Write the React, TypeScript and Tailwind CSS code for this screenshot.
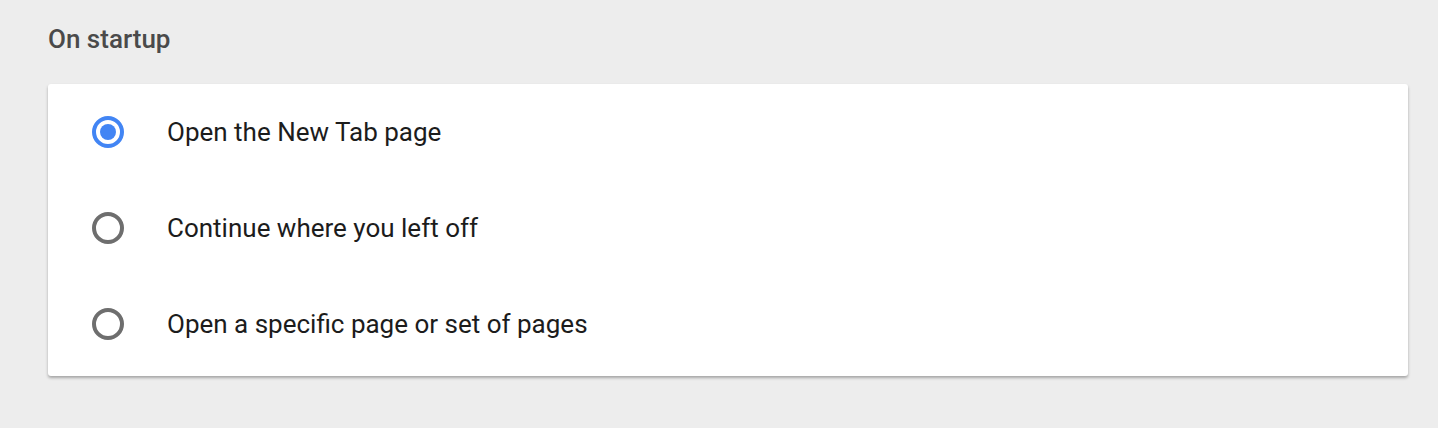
import React from 'react';

const options = [
  { label: 'Open the New Tab page', checked: true },
  { label: 'Continue where you left off', checked: false },
  { label: 'Open a specific page or set of pages', checked: false },
];

const Radio = ({ checked }: { checked: boolean }) => (
  <div
    className={`w-[32px] h-[32px] rounded-full border-[4px] flex items-center justify-center ${
      checked ? 'border-[#4285f4]' : 'border-[#6e6e6e]'
    }`}
  >
    {checked && <div className="w-[16px] h-[16px] rounded-full bg-[#4285f4]" />}
  </div>
);

export default function App() {
  return (
    <div
      className="w-[1438px] h-[428px] bg-[#ededed] px-[48px] pt-[24px]"
      style={{ fontFamily: 'Roboto, "Liberation Sans", sans-serif' }}
    >
      <h2 className="text-[26px] leading-[30px] font-medium text-[#4a4a4a] mb-[30px]">On startup</h2>
      <div className="w-[1360px] bg-white rounded-[3px] shadow-[0_2px_3px_rgba(0,0,0,0.3)] pb-[4px]">
        {options.map((o) => (
          <div key={o.label} className="h-[96px] flex items-center">
            <div className="w-[119px] flex justify-center">
              <Radio checked={o.checked} />
            </div>
            <span className="text-[26px] text-[#1c1c1c]">{o.label}</span>
          </div>
        ))}
      </div>
    </div>
  );
}
